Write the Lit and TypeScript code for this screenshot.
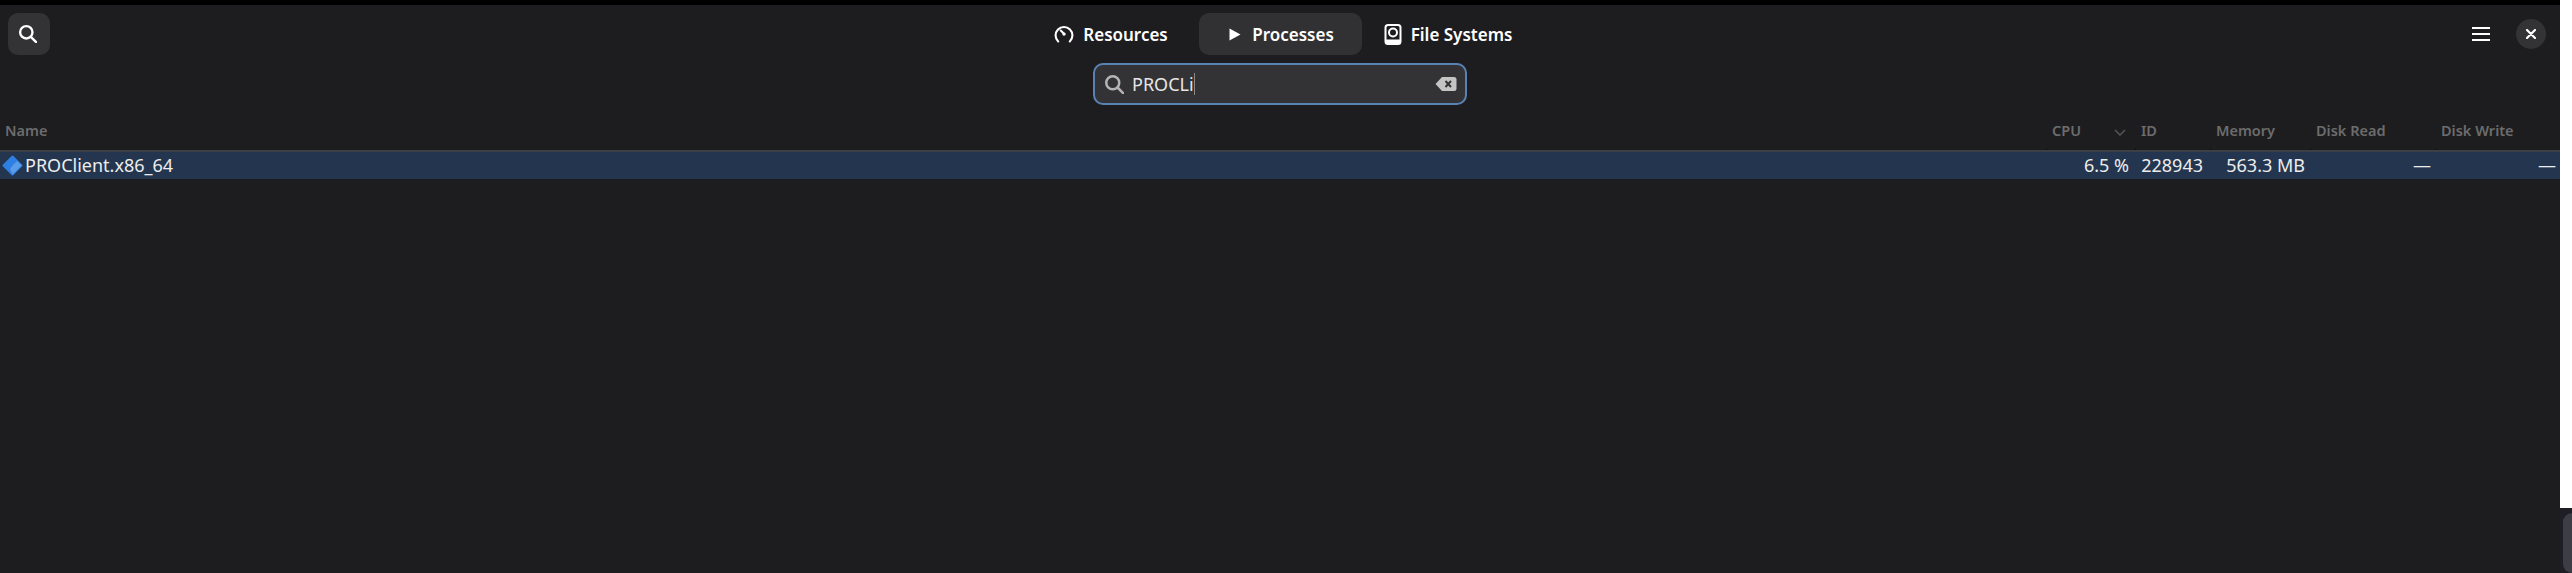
import { LitElement, html, css, svg } from 'lit';
import { customElement } from 'lit/decorators.js';

interface Column {
  label: string;
  value: string;
  pad: number;
}

const COLUMNS: Column[] = [
  { label: 'CPU', value: '6.5 %', pad: 7 },
  { label: 'ID', value: '228943', pad: 8 },
  { label: 'Memory', value: '563.3 MB', pad: 6 },
  { label: 'Disk Read', value: '—', pad: 5 },
  { label: 'Disk Write', value: '—', pad: 4 },
];

const searchIcon = svg`<circle cx="7" cy="7" r="5.2" fill="none" stroke="currentColor" stroke-width="2"/><path d="M11 11l4.4 4.4" fill="none" stroke="currentColor" stroke-width="2" stroke-linecap="round"/>`;

@customElement('app-root')
export class AppRoot extends LitElement {
  static styles = css`
    :host {
      display: flex;
      width: 2572px;
      height: 573px;
      overflow: hidden;
      font-family: 'Noto Sans', sans-serif;
      background: #1d1d1f;
    }
    .window {
      width: 2560px;
      height: 573px;
      display: flex;
      flex-direction: column;
      background: #1d1d1f;
      border-top: 5px solid #000;
      box-sizing: border-box;
      color: #fff;
    }
    .side {
      width: 12px;
      display: flex;
      flex-direction: column;
    }
    .side-white {
      height: 523px;
      background: #fff;
    }
    .side-rest {
      flex: 1;
      background: #1e1e24;
      padding-top: 5px;
      padding-left: 3px;
    }
    .side-handle {
      height: 60px;
      border-radius: 10px 0 0 10px;
      background: #3d3d46;
    }
    .header {
      height: 50px;
      padding-top: 8px;
      box-sizing: border-box;
      display: grid;
      grid-template-columns: 1fr auto 1fr;
      align-items: start;
    }
    .icon-btn {
      width: 42px;
      height: 42px;
      margin-left: 8px;
      padding: 0 3px 2px 0;
      box-sizing: border-box;
      border-radius: 10px;
      background: #333335;
      display: flex;
      align-items: center;
      justify-content: center;
      color: #fff;
    }
    .icon-btn svg {
      width: 19px;
      height: 19px;
    }
    .tabs {
      display: grid;
      grid-template-columns: repeat(3, 163px);
    }
    .tab {
      height: 42px;
      border-radius: 10px;
      display: flex;
      align-items: center;
      justify-content: center;
      gap: 9px;
      font-size: 17px;
      font-weight: 600;
      box-sizing: border-box;
    }
    .tab.active {
      background: #313133;
      padding-left: 3px;
      gap: 11px;
    }
    .tab.res {
      padding-right: 12px;
    }
    .tab.fs {
      padding-left: 10px;
    }
    .tab svg {
      display: block;
    }
    .end {
      display: flex;
      justify-content: flex-end;
      align-items: center;
      height: 42px;
      gap: 26px;
      padding-right: 14px;
    }
    .close {
      width: 30px;
      height: 30px;
      border-radius: 50%;
      background: #333335;
      display: flex;
      align-items: center;
      justify-content: center;
    }
    .search-row {
      display: flex;
      justify-content: center;
      padding-top: 8px;
      height: 50px;
      box-sizing: border-box;
    }
    .entry {
      width: 374px;
      height: 42px;
      box-sizing: border-box;
      border: 2px solid #5a83b5;
      border-radius: 10px;
      background: #333336;
      display: flex;
      align-items: center;
      padding: 0 8px 0 9px;
      color: #e6e6e6;
      font-size: 18px;
    }
    .entry .glass {
      width: 20px;
      height: 20px;
      color: #b4b4b4;
      margin-right: 8px;
    }
    .caret {
      width: 1px;
      height: 22px;
      background: #8a8a8a;
    }
    .clear {
      margin-left: auto;
    }
    .table-head {
      height: 45px;
      display: grid;
      grid-template-columns: 2047px 89px 75px 100px 125px 124px;
      align-items: end;
      font-size: 14.5px;
      font-weight: 600;
      color: #6c6c6d;
    }
    .th {
      height: 40px;
      line-height: 40px;
      padding-left: 5px;
      position: relative;
    }
    .th::after {
      content: '';
      position: absolute;
      left: -1px;
      bottom: 0;
      width: 1px;
      height: 2px;
      background: #111;
    }
    .th.name {
      padding-left: 5px;
    }
    .sort {
      position: absolute;
      left: 67px;
      top: 19px;
    }
    .row {
      height: 29px;
      display: grid;
      grid-template-columns: 2047px 89px 75px 100px 125px 124px;
      background: #24364f;
      border-top: 2px solid #3c4046;
      box-sizing: border-box;
      font-size: 18px;
      color: #ededed;
      line-height: 27px;
    }
    .td {
      text-align: right;
      white-space: nowrap;
    }
    .td.name {
      text-align: left;
      display: flex;
      align-items: center;
      gap: 2px;
      padding-left: 2px;
    }
  `;

  render() {
    return html`
      <div class="window">
        <div class="header">
          <div>
            <div class="icon-btn">
              <svg viewBox="0 0 16 16">${searchIcon}</svg>
            </div>
          </div>
          <div class="tabs">
            <div class="tab res">
              <svg width="20" height="20" viewBox="0 0 19 19" fill="none" stroke="#fff" stroke-width="2">
                <path d="M4 16.6A8 8 0 1 1 15 16.6" stroke-linecap="round" />
                <path d="M6.4 6.2l3.4 3.2" stroke-linecap="round" />
                <circle cx="9.5" cy="9.6" r="1.6" fill="#fff" stroke="none" />
              </svg>
              <span>Resources</span>
            </div>
            <div class="tab active">
              <svg width="12" height="13" viewBox="0 0 12 13"><path d="M0.5 0.5L11.5 6.5L0.5 12.5Z" fill="#fff" /></svg>
              <span>Processes</span>
            </div>
            <div class="tab fs">
              <svg width="18" height="21" viewBox="0 0 17 21" fill="none">
                <rect x="1" y="1" width="15" height="19" rx="2.5" stroke="#fff" stroke-width="2" />
                <circle cx="8.5" cy="8.5" r="4" stroke="#fff" stroke-width="2" />
                <path d="M1 15.5h15V18a2 2 0 0 1-2 2H3a2 2 0 0 1-2-2Z" fill="#fff" />
              </svg>
              <span>File Systems</span>
            </div>
          </div>
          <div class="end">
            <svg width="18" height="14" viewBox="0 0 18 14">
              <path d="M0 1h18M0 7h18M0 13h18" stroke="#fff" stroke-width="2" />
            </svg>
            <div class="close">
              <svg width="10" height="10" viewBox="0 0 10 10">
                <path d="M1 1l8 8M9 1l-8 8" stroke="#fff" stroke-width="2.2" stroke-linecap="round" />
              </svg>
            </div>
          </div>
        </div>
        <div class="search-row">
          <div class="entry">
            <svg class="glass" viewBox="0 0 16 16">${searchIcon}</svg>
            <span>PROCLi</span><span class="caret"></span>
            <svg class="clear" width="22" height="16" viewBox="0 0 22 16">
              <path d="M7 1h12a2.5 2.5 0 0 1 2.5 2.5v9A2.5 2.5 0 0 1 19 15H7L0.5 8Z" fill="#c4c4c4" />
              <path d="M10.5 5l5.5 6M16 5l-5.5 6" stroke="#333336" stroke-width="2" />
            </svg>
          </div>
        </div>
        <div class="table-head">
          <div class="th name">Name</div>
          ${COLUMNS.map(
            (c) => html`<div class="th">
              ${c.label}
              ${c.label === 'CPU'
                ? html`<svg class="sort" width="12" height="7" viewBox="0 0 12 7">
                    <path d="M1 1l5 5 5-5" fill="none" stroke="#555" stroke-width="1.5" />
                  </svg>`
                : ''}
            </div>`
          )}
        </div>
        <div class="row">
          <div class="td name">
            <svg width="21" height="21" viewBox="0 0 21 21">
              <path d="M10.5 1.5L19.5 10.5L10.5 19.5L1.5 10.5Z" fill="#2f7fe2" stroke="#2f7fe2" stroke-width="2" stroke-linejoin="round" />
              <path d="M10.5 10.5L15 6L19.5 10.5L10.5 19.5L8 14Z" fill="#5a9bea" />
            </svg>
            <span>PROClient.x86_64</span>
          </div>
          ${COLUMNS.map((c) => html`<div class="td" style="padding-right:${c.pad}px">${c.value}</div>`)}
        </div>
      </div>
      <div class="side">
        <div class="side-white"></div>
        <div class="side-rest"><div class="side-handle"></div></div>
      </div>
    `;
  }
}
